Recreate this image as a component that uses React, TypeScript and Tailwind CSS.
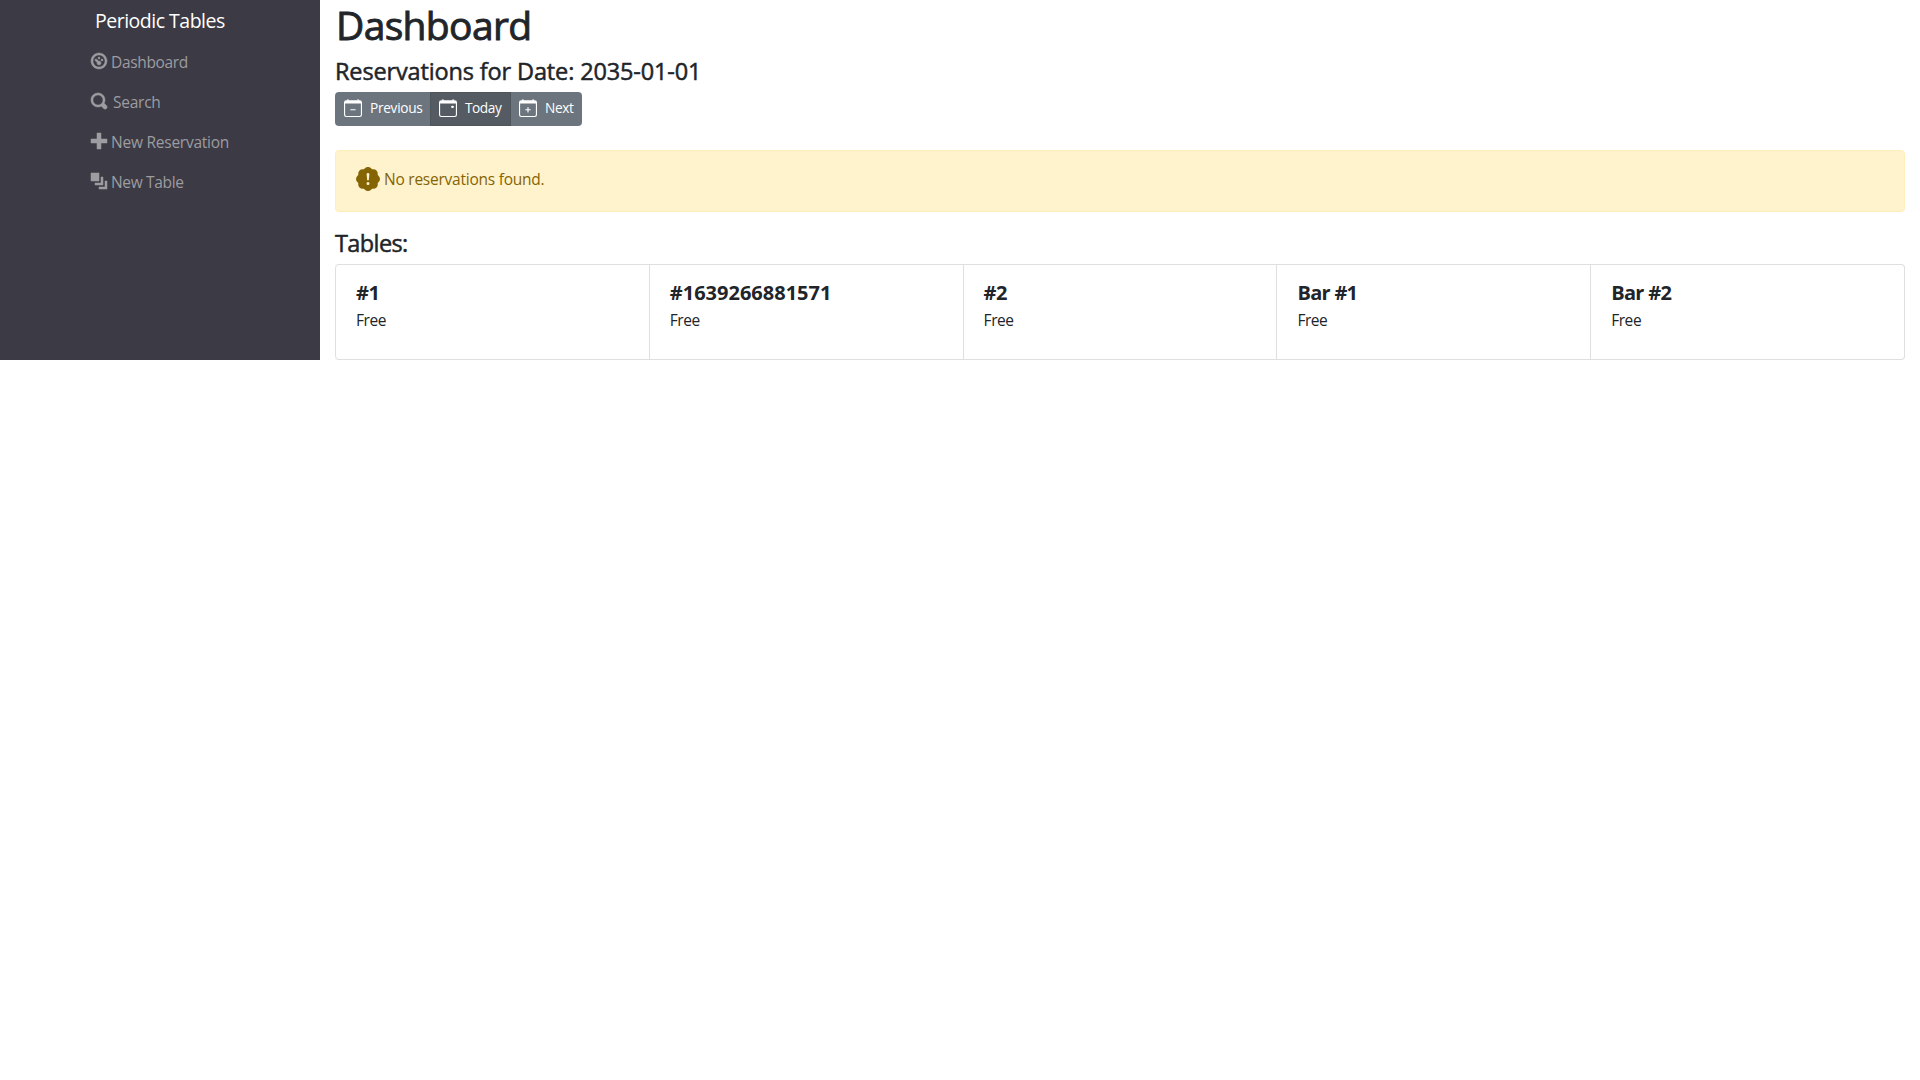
import React from "react";
import {
  BsCalendarEvent,
  BsCalendarMinus,
  BsCalendarPlus,
  BsPatchExclamationFill,
} from "react-icons/bs";

const navItems = [
  {
    label: "Dashboard",
    text: "ml-[4px] tracking-[-0.33px]",
    path: "M4 0c-2.2 0-4 1.8-4 4s1.8 4 4 4 4-1.8 4-4-1.8-4-4-4zm0 1c1.66 0 3 1.34 3 3s-1.34 3-3 3-3-1.34-3-3 1.34-3 3-3zm0 1c-.28 0-.5.22-.5.5s.22.5.5.5.5-.22.5-.5-.22-.5-.5-.5zm-1.66 1a.5.5 0 0 0-.19.84l.91.91c-.02.08-.06.16-.06.25 0 .55.45 1 1 1s1-.45 1-1-.45-1-1-1c-.09 0-.17.04-.25.06l-.91-.91a.5.5 0 0 0-.44-.16.5.5 0 0 0-.06 0zm3.16 0c-.28 0-.5.22-.5.5s.22.5.5.5.5-.22.5-.5-.22-.5-.5-.5z",
  },
  {
    label: "Search",
    text: "ml-[6px] tracking-[-0.25px]",
    path: "M3.5 0c-1.93 0-3.5 1.57-3.5 3.5s1.57 3.5 3.5 3.5c.59 0 1.17-.14 1.66-.41a1 1 0 0 0 .13.13l1 1a1.02 1.02 0 1 0 1.44-1.44l-1-1a1 1 0 0 0-.16-.13c.27-.49.44-1.06.44-1.66 0-1.93-1.55-3.5-3.5-3.5zm0 1c1.39 0 2.5 1.11 2.5 2.5 0 .66-.24 1.27-.66 1.72-.01.01-.02.02-.03.03a1 1 0 0 0-.13.13c-.44.4-1.04.63-1.69.63-1.39 0-2.5-1.11-2.5-2.5s1.11-2.5 2.5-2.5z",
  },
  {
    label: "New Reservation",
    text: "ml-[4px] tracking-[-0.24px]",
    path: "M3 0v3h-3v2h3v3h2v-3h3v-2h-3v-3h-2z",
  },
  {
    label: "New Table",
    text: "ml-[4px] tracking-[-0.33px]",
    path: "M0 0v4h4v-4h-4zm5 2v3h-3v1h4v-4h-1zm2 2v3h-3v1h4v-4h-1z",
  },
];

const tables = [
  { name: "#1", text: "tracking-[-0.5px]" },
  { name: "#1639266881571", text: "tracking-[0px]" },
  { name: "#2", text: "tracking-[-0.4px]" },
  { name: "Bar #1", text: "tracking-[-0.7px]" },
  { name: "Bar #2", text: "tracking-[-0.7px]" },
];

function Sidebar() {
  return (
    <nav className="h-[360px] w-[320px] shrink-0 bg-[#3c3a44] text-white">
      <div className="flex h-[42px] items-center pl-[95px] text-[19.5px] leading-[30px]">
        <span className="tracking-[-0.5px]">Periodic Tables</span>
      </div>
      <ul>
        {navItems.map((item) => (
          <li key={item.label}>
            <a className="flex h-[40px] items-center pl-[90.5px] text-[15.5px] text-[#9d9ca1]">
              <svg
                viewBox="0 0 8 8"
                className="-mt-[3px] size-[16px] shrink-0 overflow-visible fill-current stroke-current stroke-[0.25]"
              >
                <path d={item.path} />
              </svg>
              <span className="pt-[2px] pl-[0.5px]">
                <span className={item.text}>{item.label}</span>
              </span>
            </a>
          </li>
        ))}
      </ul>
    </nav>
  );
}

function DateButtons() {
  return (
    <div className="flex h-[34px] w-[247px] overflow-hidden rounded-[4px] bg-[#6c757d] text-[13.7px] text-white">
      <button className="flex w-[95px] items-center pb-[2px] pl-[9px]">
        <BsCalendarMinus className="size-[18px]" />
        <span className="ml-[8px] tracking-[-0.3px]">Previous</span>
      </button>
      <button className="flex w-[81px] items-center border border-[#4e555b] bg-[#545b62] pb-[2px] pl-[8px]">
        <BsCalendarEvent className="size-[18px]" />
        <span className="ml-[8px] tracking-[-0.45px]">Today</span>
      </button>
      <button className="flex w-[71px] items-center pb-[2px] pl-[8px]">
        <BsCalendarPlus className="size-[18px]" />
        <span className="ml-[8px] tracking-[-0.4px]">Next</span>
      </button>
    </div>
  );
}

export default function App() {
  return (
    <div className="flex min-h-screen items-start bg-white font-['Open_Sans',sans-serif] text-[#212529]">
      <Sidebar />
      <main className="w-[1600px] px-[15px]">
        <h1 className="h-[56px] pl-px text-[39px] leading-[49px] font-medium [-webkit-text-stroke:0.9px]">
          <span className="tracking-[-0.65px]">Dashboard</span>
        </h1>
        <h4 className="h-[36px] text-[23.5px] leading-[30px] font-medium [-webkit-text-stroke:0.5px]">
          <span className="tracking-[-0.14px]">Reservations for Date: 2035-01-01</span>
        </h4>
        <DateButtons />
        <div className="mt-[24px] flex h-[62px] rounded-[4px] border border-[#ffeeba] bg-[#fff3cd] pt-[16px] pl-[20px] text-[15.5px] leading-[25px] text-[#856404]">
          <BsPatchExclamationFill className="size-[24px]" />
          <span className="ml-[4px] tracking-[-0.24px]">No reservations found.</span>
        </div>
        <h4 className="mt-[16px] h-[36px] text-[23.5px] leading-[30px] font-medium [-webkit-text-stroke:0.5px]">
          <span className="tracking-[-0.6px]">Tables:</span>
        </h4>
        <div className="grid h-[96px] grid-cols-5 rounded-[4px] border border-l-0 border-[#dfdfdf]">
          {tables.map((table) => (
            <section
              key={table.name}
              className="border-l border-[#dfdfdf] pt-[16px] pl-[20px] first:rounded-l-[4px]"
            >
              <h5 className="h-[27px] text-[20px] leading-[24px] font-bold">
                <span className={table.text}>{table.name}</span>
              </h5>
              <p className="text-[15.5px] leading-[24px]">
                <span className="tracking-[-0.45px]">Free</span>
              </p>
            </section>
          ))}
        </div>
      </main>
    </div>
  );
}
